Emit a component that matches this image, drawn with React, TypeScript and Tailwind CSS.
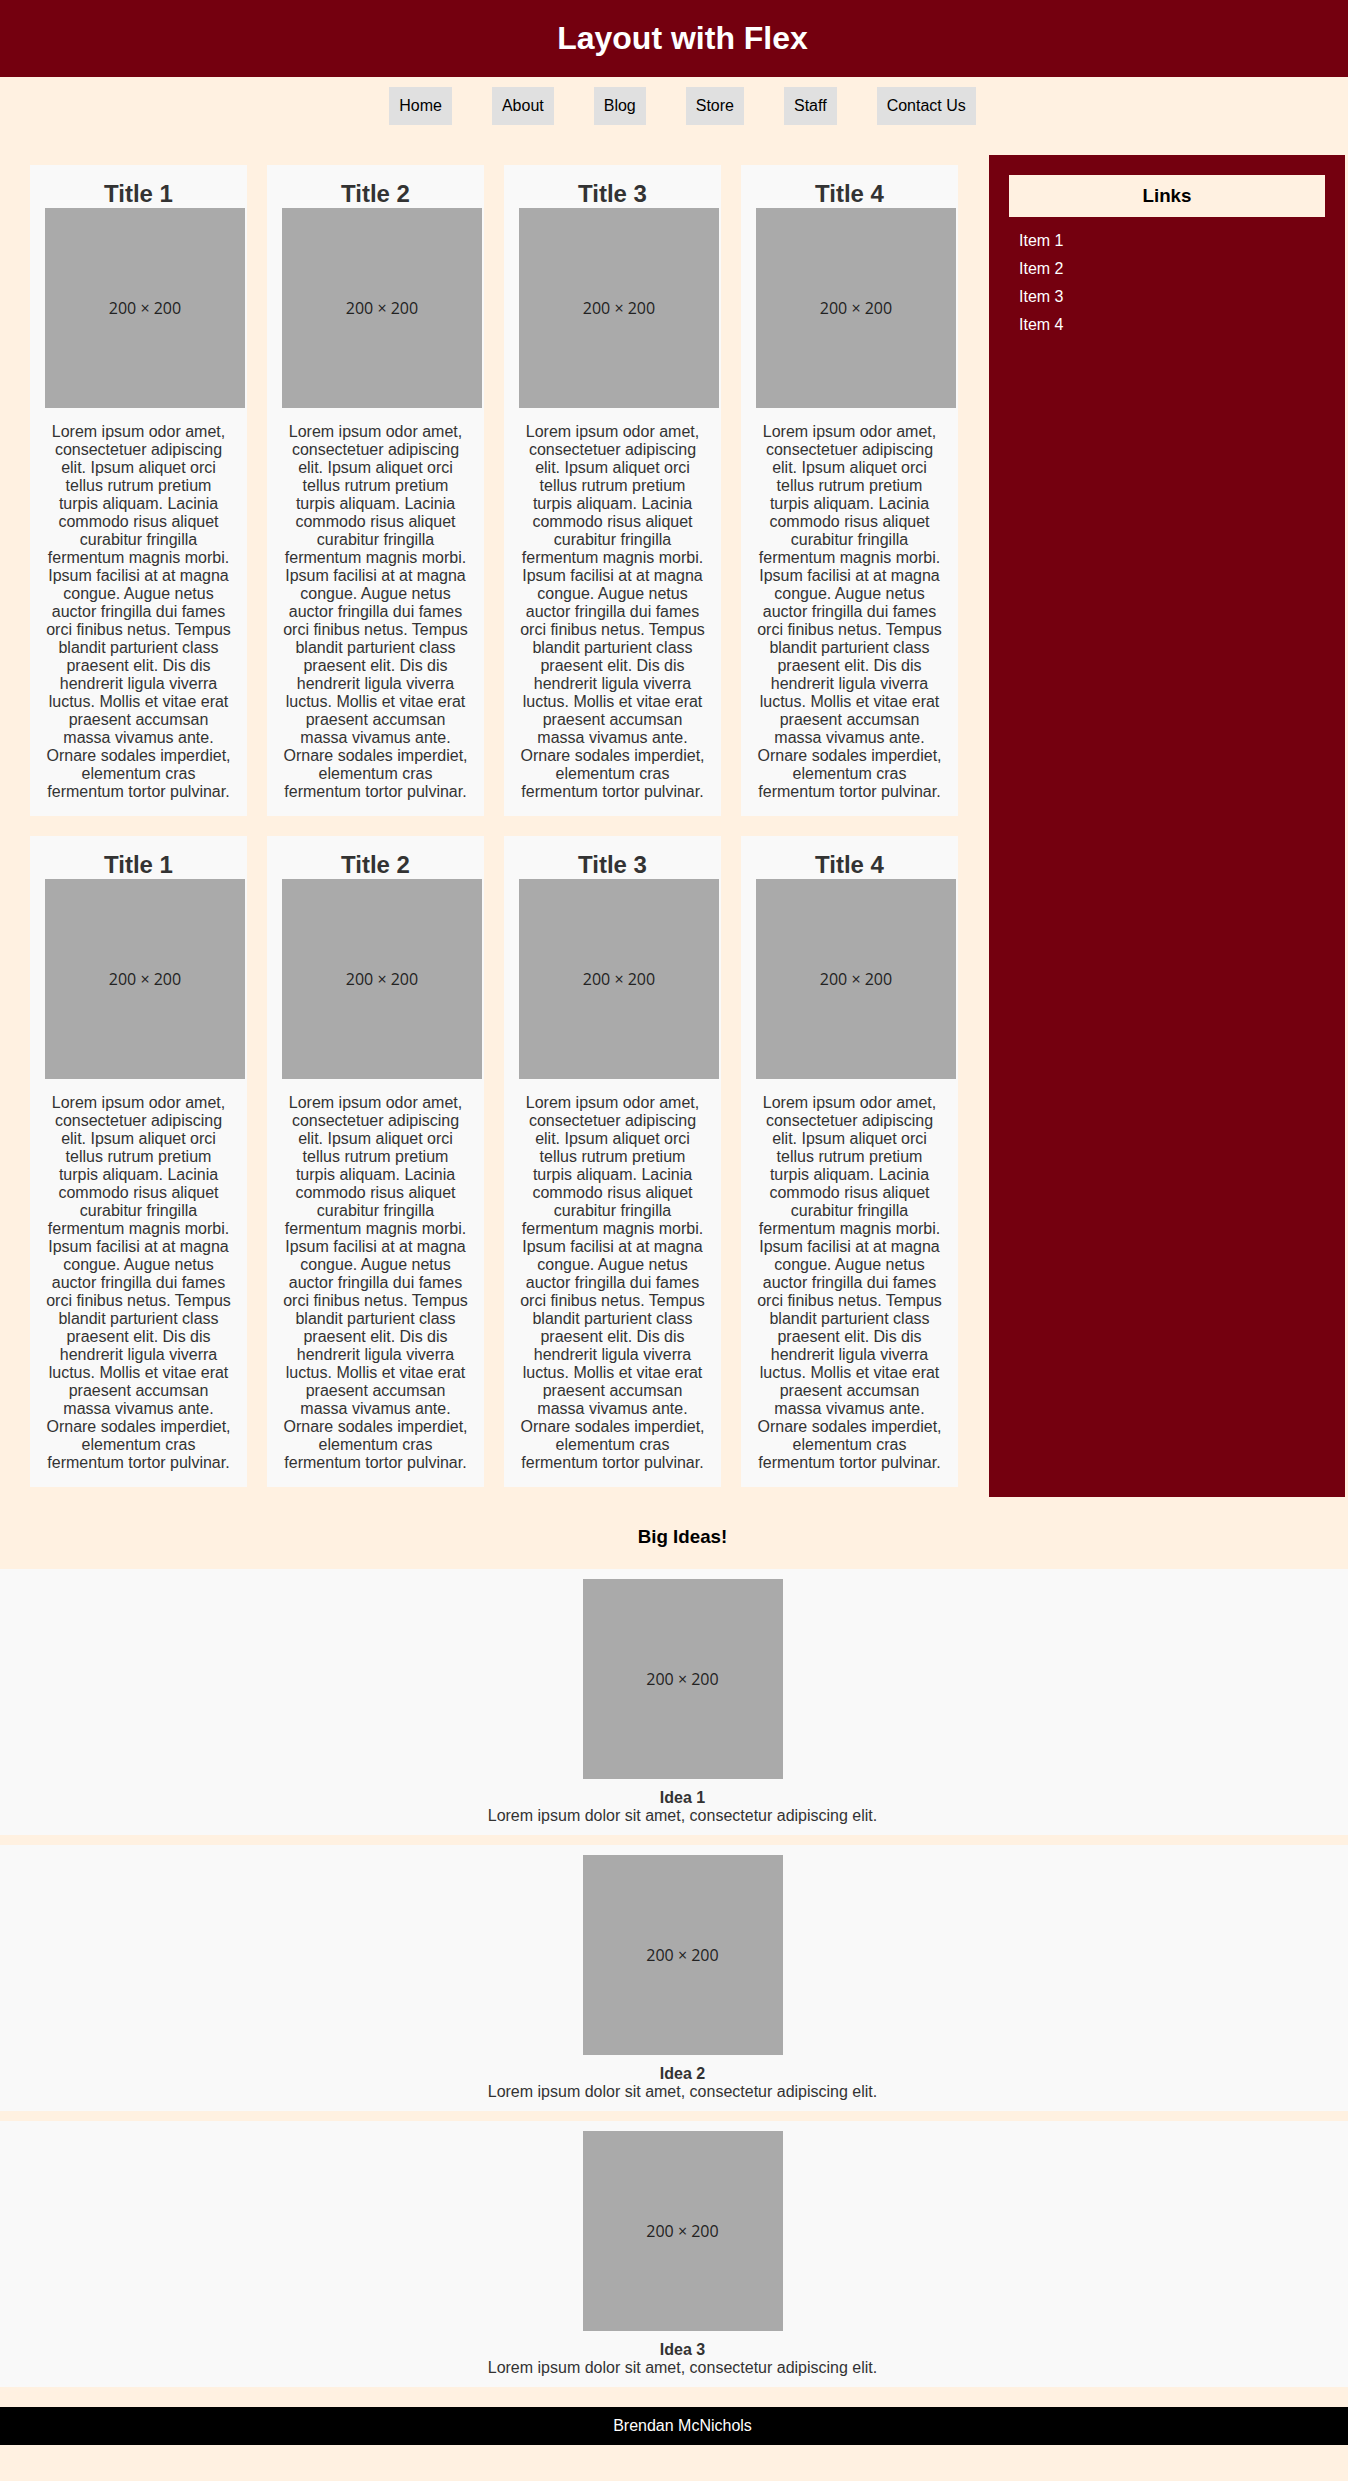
import React from "react";

const LOREM =
  "Lorem ipsum odor amet, consectetuer adipiscing elit. Ipsum aliquet orci tellus rutrum pretium turpis aliquam. Lacinia commodo risus aliquet curabitur fringilla fermentum magnis morbi. Ipsum facilisi at at magna congue. Augue netus auctor fringilla dui fames orci finibus netus. Tempus blandit parturient class praesent elit. Dis dis hendrerit ligula viverra luctus. Mollis et vitae erat praesent accumsan massa vivamus ante. Ornare sodales imperdiet, elementum cras fermentum tortor pulvinar.";

const NAV = ["Home", "About", "Blog", "Store", "Staff", "Contact Us"];

function Placeholder() {
  return (
    <div className="w-[200px] h-[200px] shrink-0 bg-[#aaaaaa] flex items-center justify-center">
      <span className="font-['Open_Sans','Noto_Sans',sans-serif] text-[16px] text-[#222]">
        200 × 200
      </span>
    </div>
  );
}

function Card({ n }: { n: number }) {
  return (
    <div className="w-[217px] m-[10px] bg-[#f9f9f9] p-[15px]">
      <h2 className="text-center text-[24px] leading-[28px] font-bold text-[#333]">
        Title {n}
      </h2>
      <Placeholder />
      <p className="mt-[15px] text-center text-[16px] leading-[18px] text-[#333]">
        {LOREM}
      </p>
    </div>
  );
}

function Idea({ n }: { n: number }) {
  return (
    <div className="bg-[#f9f9f9] py-[10px] pl-[17px] flex flex-col items-center">
      <Placeholder />
      <div className="mt-[10px] text-[16px] leading-[18px] font-bold text-[#333]">
        Idea {n}
      </div>
      <div className="text-[16px] leading-[18px] text-[#333]">
        Lorem ipsum dolor sit amet, consectetur adipiscing elit.
      </div>
    </div>
  );
}

export default function App() {
  return (
    <div className="min-h-screen bg-[#fff1e1] font-['Liberation_Sans',Arial,sans-serif]">
      <header className="h-[77px] bg-[#74000f] flex items-center justify-center pl-[17px]">
        <h1 className="text-[32px] leading-[37px] font-bold text-white">
          Layout with Flex
        </h1>
      </header>

      <nav className="mt-[10px] flex justify-center gap-[40px] pl-[17px]">
        {NAV.map((item) => (
          <a
            key={item}
            className="h-[38px] px-[10px] bg-[#e0e0e0] flex items-center text-[16px] text-black"
          >
            {item}
          </a>
        ))}
      </nav>

      <div className="mt-[30px] flex">
        <main className="w-[969px] pl-[20px] flex flex-wrap content-start">
          {[1, 2, 3, 4, 1, 2, 3, 4].map((n, i) => (
            <Card key={i} n={n} />
          ))}
        </main>
        <aside className="ml-[20px] w-[356px] bg-[#74000f] p-[20px]">
          <div className="h-[42px] bg-[#fff1e1] flex items-center justify-center text-[18.72px] font-bold text-black">
            Links
          </div>
          <ul className="mt-[15px] pl-[10px] flex flex-col gap-[10px] text-[16px] leading-[18px] text-white">
            <li>Item 1</li>
            <li>Item 2</li>
            <li>Item 3</li>
            <li>Item 4</li>
          </ul>
        </aside>
      </div>

      <h3 className="pt-[29px] pb-[21px] pl-[17px] text-center text-[18.72px] leading-[22px] font-bold text-black">
        Big Ideas!
      </h3>

      <div className="flex flex-col gap-[10px]">
        <Idea n={1} />
        <Idea n={2} />
        <Idea n={3} />
      </div>

      <footer className="mt-[20px] h-[38px] bg-black flex items-center justify-center pl-[17px] text-[16px] text-white">
        Brendan McNichols
      </footer>
    </div>
  );
}
